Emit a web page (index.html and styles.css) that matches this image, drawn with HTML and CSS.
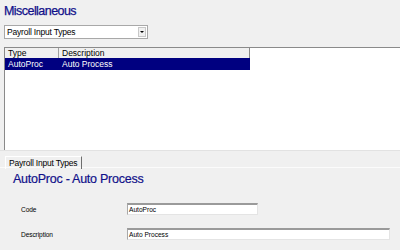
FILE: index.html
```html
<!DOCTYPE html>
<html lang="en">
<head>
    <meta charset="UTF-8">
    <title>Miscellaneous</title>
    <link rel="stylesheet" href="styles.css">
</head>
<body>
    <h1 class="titulo">Miscellaneous</h1>

    <div class="combo">
        <span class="combo-text">Payroll Input Types</span>
        <span class="combo-btn"><span class="flecha"></span></span>
    </div>

    <div class="lista">
        <div class="lista-head">
            <div class="col col-tipo">Type</div>
            <div class="col col-desc">Description</div>
        </div>
        <div class="fila seleccionada">
            <div class="col col-tipo">AutoProc</div>
            <div class="col col-desc">Auto Process</div>
        </div>
    </div>

    <div class="tabs">
        <div class="tab">Payroll Input Types</div>
    </div>

    <div class="panel">
        <h2 class="panel-titulo">AutoProc - Auto Process</h2>
        <div class="campo">
            <label class="etiqueta">Code</label>
            <div class="entrada entrada-corta">AutoProc</div>
        </div>
        <div class="campo">
            <label class="etiqueta">Description</label>
            <div class="entrada entrada-larga">Auto Process</div>
        </div>
    </div>
</body>
</html>
```

FILE: styles.css
```css
body {
    font-family: "Liberation Sans", Arial, sans-serif;
    margin: 0;
    padding: 0;
    background-color: #f0f0f0;
    color: #000;
    width: 400px;
    height: 250px;
    overflow: hidden;
}
.titulo {
    font-size: 12.5px;
    font-weight: normal;
    letter-spacing: -0.55px;
    line-height: 16px;
    color: #10108a;
    margin: 3px 0 0 4px;
    -webkit-text-stroke: 0.25px #10108a;
}
.combo {
    display: flex;
    align-items: center;
    justify-content: space-between;
    width: 142px;
    height: 12px;
    margin: 6px 0 0 4px;
    background-color: white;
    border: 1px solid #a8a8a8;
}
.combo-text {
    font-size: 8.5px;
    letter-spacing: -0.2px;
    padding-left: 2px;
    line-height: 12px;
}
.combo-btn {
    display: flex;
    align-items: center;
    justify-content: center;
    width: 8px;
    height: 10px;
    margin-right: 1px;
    background-color: #f0f0f0;
    border: 1px solid #c8c8c8;
    box-sizing: border-box;
}
.flecha {
    width: 0;
    height: 0;
    border-left: 2px solid transparent;
    border-right: 2px solid transparent;
    border-top: 2px solid #000;
}
.lista {
    margin: 8px 0 0 4px;
    height: 102px;
    background-color: white;
    border-top: 1px solid #8a8a8a;
    border-left: 1px solid #8a8a8a;
    font-size: 8.5px;
}
.lista-head {
    display: flex;
    width: 244px;
    height: 10px;
    background-color: #f0f0f0;
    border-right: 1px solid #8a8a8a;
    line-height: 10px;
}
.fila {
    display: flex;
    width: 245px;
    height: 12px;
    line-height: 12px;
}
.seleccionada {
    background-color: #000080;
    color: white;
}
.col-tipo {
    width: 54px;
    padding-left: 3px;
    box-sizing: border-box;
}
.lista-head .col-tipo {
    border-right: 1px solid #a0a0a0;
}
.col-desc {
    padding-left: 3px;
}
.tabs {
    height: 18px;
    border-top: 1px solid #e2e2e2;
    border-bottom: 1px solid #fbfbfb;
    box-sizing: border-box;
    padding: 5px 0 0 5px;
}
.tab {
    width: 77px;
    height: 13px;
    box-sizing: border-box;
    border-top: 1px solid #fff;
    border-left: 1px solid #fff;
    border-right: 1px solid #6e6e6e;
    font-size: 8.5px;
    letter-spacing: -0.2px;
    line-height: 12px;
    padding-left: 3px;
}
.panel {
    padding: 1px 0 0 0;
}
.panel-titulo {
    font-size: 12.5px;
    font-weight: normal;
    letter-spacing: -0.25px;
    line-height: 16px;
    color: #10108a;
    margin: 2px 0 0 13px;
    -webkit-text-stroke: 0.2px #10108a;
}
.campo {
    display: flex;
    align-items: center;
    margin-left: 21px;
    height: 12px;
}
.panel-titulo + .campo {
    margin-top: 16px;
}
.campo + .campo {
    margin-top: 13px;
}
.etiqueta {
    width: 106px;
    font-size: 6.6px;
    letter-spacing: -0.1px;
}
.entrada {
    height: 12px;
    box-sizing: border-box;
    background-color: white;
    border-top: 2px solid #9a9a9a;
    border-left: 1px solid #a8a8a8;
    border-right: 1px solid #e4e4e4;
    border-bottom: 1px solid #e4e4e4;
    font-size: 6.6px;
    line-height: 9px;
    padding-left: 1px;
}
.entrada-corta {
    width: 131px;
}
.entrada-larga {
    width: 263px;
}
```
